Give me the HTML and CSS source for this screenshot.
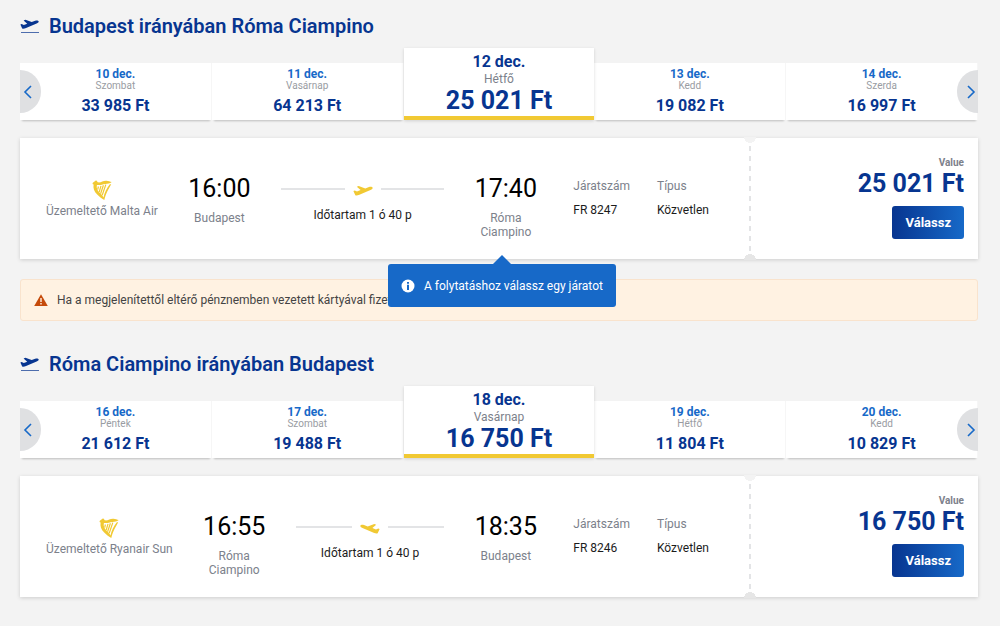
FILE: index.html
```
<!DOCTYPE html>
<html lang="hu">
<head>
<meta charset="utf-8">
<meta name="viewport" content="width=device-width, initial-scale=1">
<title>Budapest – Róma Ciampino</title>
<link rel="stylesheet" href="styles.css">
</head>
<body>
<svg class="symbols" aria-hidden="true">
  <symbol id="takeoff" viewBox="0 0 20 11">
    <path d="M.4 5.600 1.800 4.900 4 5.900 7.600 4.600 3.800 1.300l1.900-.7 6.600 2.300L16 1.500c1.500-.5 3.200-.4 3.600.5.400 1-.7 1.900-2.100 2.400L6.400 9.300c-1.900.7-3.600 1.100-4.200.200z"/>
  </symbol>
  <symbol id="harp" viewBox="0 0 20 20">
    <path d="M.8 2.800 2.800 1.200c.6-.9 2.100-.8 2.500.2.200.5.100.7.400.9 3.300.7 5.200-1.800 8.800-1.500 2 .2 3.500.9 5.200 1.200-1.700 2-4.200 1.700-6.200 1.900-3.200.3-5.500 1.600-8.600 1-.8 2.900.6 6 3.500 8.700 1.400 1.400 2.500 2.500 3.100 4C12.300 12.500 14.800 8 17.800 4.200h1.400C16.700 9 13.900 13 12.300 20 9.500 18.200 7.300 17 5.200 14.600 2 11.300 1 8 1.600 4.400L.5 4z"/>
    <path class="strings" d="M6.400 6.500 5.700 9.600M9 5.800 7.200 12M11.400 5.200 8.600 13.800M13.800 4.600 10.200 15.300"/>
  </symbol>
</svg>

<main class="page">
  <section class="journey">
    <h2 class="journey-title">
      <svg class="title-icon" viewBox="0 0 20 15"><use href="#takeoff" width="19" height="11"/><path d="M1 13.500h18" stroke="currentColor" opacity=".7"/></svg>
      Budapest irányában Róma Ciampino
    </h2>
    <div class="dates">
      <button class="day"><span class="date">10 dec.</span><span class="weekday">Szombat</span><span class="fare">33 985 Ft</span></button>
      <button class="day"><span class="date">11 dec.</span><span class="weekday">Vasárnap</span><span class="fare">64 213 Ft</span></button>
      <button class="day selected" aria-pressed="true"><span class="date">12 dec.</span><span class="weekday">Hétfő</span><span class="fare">25 021 Ft</span></button>
      <button class="day"><span class="date">13 dec.</span><span class="weekday">Kedd</span><span class="fare">19 082 Ft</span></button>
      <button class="day"><span class="date">14 dec.</span><span class="weekday">Szerda</span><span class="fare">16 997 Ft</span></button>
      <button class="nav prev" aria-label="Előző"><svg viewBox="0 0 10 14"><path d="M8 1 2 7l6 6"/></svg></button>
      <button class="nav next" aria-label="Következő"><svg viewBox="0 0 10 14"><path d="m2 1 6 6-6 6"/></svg></button>
    </div>
    <article class="flight">
      <div class="trip">
        <div class="airline"><svg class="harp"><use href="#harp"/></svg><span>Üzemeltető Malta Air</span></div>
        <div class="stop"><time class="clock">16:00</time><span class="city">Budapest</span></div>
        <div class="route">
          <div class="track"><svg class="plane"><use href="#takeoff"/></svg></div>
          <span class="duration">Időtartam 1 ó 40 p</span>
        </div>
        <div class="stop"><time class="clock">17:40</time><span class="city">Róma Ciampino</span></div>
        <dl class="facts">
          <div class="fact"><dt>Járatszám</dt><dd>FR 8247</dd></div>
          <div class="fact"><dt>Típus</dt><dd>Közvetlen</dd></div>
        </dl>
      </div>
      <div class="offer">
        <span class="plan">Value</span>
        <span class="price">25 021 Ft</span>
        <button class="choose">Válassz</button>
      </div>
      <div class="tooltip" role="tooltip">
        <svg class="info" viewBox="0 0 14 14"><circle cx="7" cy="7" r="6.500"/><path d="M6 3h2v1.700H6zM6 5.800h2V11H6z"/></svg>
        A folytatáshoz válassz egy járatot
      </div>
    </article>
  </section>

  <div class="notice">
    <svg class="warning" viewBox="0 0 14 12"><path d="M7 .3 13.800 12H.2z"/><path class="mark" d="M6.300 4h1.400v4H6.300zM6.300 9h1.400v1.500H6.300z"/></svg>
    <span>Ha a megjelenítettől eltérő pénznemben vezetett kártyával fizetsz</span>
  </div>

  <section class="journey">
    <h2 class="journey-title">
      <svg class="title-icon" viewBox="0 0 20 15"><use href="#takeoff" width="19" height="11"/><path d="M1 13.500h18" stroke="currentColor" opacity=".7"/></svg>
      Róma Ciampino irányában Budapest
    </h2>
    <div class="dates">
      <button class="day"><span class="date">16 dec.</span><span class="weekday">Péntek</span><span class="fare">21 612 Ft</span></button>
      <button class="day"><span class="date">17 dec.</span><span class="weekday">Szombat</span><span class="fare">19 488 Ft</span></button>
      <button class="day selected" aria-pressed="true"><span class="date">18 dec.</span><span class="weekday">Vasárnap</span><span class="fare">16 750 Ft</span></button>
      <button class="day"><span class="date">19 dec.</span><span class="weekday">Hétfő</span><span class="fare">11 804 Ft</span></button>
      <button class="day"><span class="date">20 dec.</span><span class="weekday">Kedd</span><span class="fare">10 829 Ft</span></button>
      <button class="nav prev" aria-label="Előző"><svg viewBox="0 0 10 14"><path d="M8 1 2 7l6 6"/></svg></button>
      <button class="nav next" aria-label="Következő"><svg viewBox="0 0 10 14"><path d="m2 1 6 6-6 6"/></svg></button>
    </div>
    <article class="flight">
      <div class="trip">
        <div class="airline"><svg class="harp"><use href="#harp"/></svg><span>Üzemeltető Ryanair Sun</span></div>
        <div class="stop"><time class="clock">16:55</time><span class="city">Róma Ciampino</span></div>
        <div class="route">
          <div class="track"><svg class="plane inbound"><use href="#takeoff"/></svg></div>
          <span class="duration">Időtartam 1 ó 40 p</span>
        </div>
        <div class="stop"><time class="clock">18:35</time><span class="city">Budapest</span></div>
        <dl class="facts">
          <div class="fact"><dt>Járatszám</dt><dd>FR 8246</dd></div>
          <div class="fact"><dt>Típus</dt><dd>Közvetlen</dd></div>
        </dl>
      </div>
      <div class="offer">
        <span class="plan">Value</span>
        <span class="price">16 750 Ft</span>
        <button class="choose">Válassz</button>
      </div>
    </article>
  </section>
</main>
</body>
</html>
```

FILE: styles.css
```
* { box-sizing: border-box; }

body {
  margin: 0;
  background: #f3f3f3;
  color: #1c1c1c;
  font: 12px/14px Roboto, "Liberation Sans", sans-serif;
}

button { font: inherit; border: 0; cursor: pointer; }

.symbols { position: absolute; width: 0; height: 0; }

.page { padding: 12px 22px 28px 20px; }

.journey-title {
  display: flex;
  align-items: center;
  gap: 9px;
  margin: 0 0 8px;
  color: #073590;
  font-size: 20px;
  line-height: 28px;
  font-weight: 600;
}
.title-icon { width: 20px; height: 15px; fill: currentColor; }

/* Date strip */
.dates {
  position: relative;
  display: flex;
  align-items: flex-end;
}
.day {
  flex: 1 1 0;
  display: flex;
  flex-direction: column;
  align-items: center;
  height: 57px;
  padding: 5px 0 0;
  background: #fff;
  border-right: 1px solid #f6f6f6;
  box-shadow: 0 3px 2px -2px rgba(0, 0, 0, .22);
}
.date { color: #1769c8; font-size: 12px; line-height: 12px; font-weight: 700; }
.weekday { color: #999ca2; font-size: 10px; line-height: 12px; }
.fare { margin-top: 4px; color: #073590; font-size: 16px; line-height: 20px; font-weight: 700; }

.selected {
  z-index: 1;
  height: 72px;
  padding-top: 4px;
  border-right: 0;
  border-bottom: 4px solid #f1c933;
  box-shadow: 0 1px 3px rgba(0, 0, 0, .15);
}
.selected .date { color: #073590; font-size: 16px; line-height: 20px; font-weight: 700; }
.selected .weekday { color: #7c818b; font-size: 12px; line-height: 14px; }
.selected .fare { margin-top: 2px; font-size: 25px; line-height: 26px; }

.nav {
  position: absolute;
  bottom: 7px;
  display: flex;
  align-items: center;
  justify-content: center;
  width: 21px;
  height: 43px;
  padding: 0;
  background: #dfe0e2;
}
.nav svg { width: 10px; height: 14px; fill: none; stroke: #1769c8; stroke-width: 1.6; }
.prev { left: 0; padding-right: 6px; border-radius: 0 22px 22px 0; }
.next { right: 0; padding-left: 6px; border-radius: 22px 0 0 22px; }

/* Flight card */
.flight {
  position: relative;
  display: flex;
  min-height: 121px;
  margin-top: 18px;
  background: #fff;
  box-shadow: 0 1px 4px rgba(0, 0, 0, .16);
}
.trip {
  flex: 1;
  display: flex;
  gap: 30px;
  padding: 35px 41px 18px 26px;
}
.airline {
  display: flex;
  flex-direction: column;
  align-items: center;
  gap: 4px;
  padding-top: 7px;
  color: #7c818b;
  white-space: nowrap;
}
.harp { width: 20px; height: 20px; fill: #f1c933; }
.strings { fill: none; stroke: #f1c933; stroke-width: 1.2; }

.stop {
  display: flex;
  flex-direction: column;
  align-items: center;
  gap: 6px;
  width: 63px;
  text-align: center;
}
.clock { color: #000; font-size: 25px; line-height: 32px; }
.city { color: #7c818b; }

.route {
  flex: 1;
  display: flex;
  flex-direction: column;
  align-items: center;
  gap: 11px;
  padding-top: 8px;
}
.track {
  display: flex;
  align-items: center;
  gap: 8px;
  align-self: stretch;
}
.track::before, .track::after { content: ""; flex: 1; height: 2px; background: #e3e4e6; }
.plane { width: 20px; height: 16px; padding-top: 4px; fill: #f1c933; }
.inbound { transform: scaleX(-1); }
.duration { color: #1c1c1c; }

.facts { display: flex; gap: 27px; margin: 0 0 0 6px; padding-top: 6px; }
.fact { display: grid; gap: 10px; align-content: start; white-space: nowrap; }
.fact dt { color: #7c818b; }
.fact dd { margin: 0; }

.offer {
  position: relative;
  display: flex;
  flex-direction: column;
  align-items: flex-end;
  width: 228px;
  padding: 18px 14px 20px;
}
/* Ticket perforation between trip and price */
.offer::before {
  content: "";
  position: absolute;
  inset: 8px auto 6px -1px;
  width: 2px;
  background: repeating-linear-gradient(#e3e4e6 0 5px, transparent 5px 10px);
}
.offer::after {
  content: "";
  position: absolute;
  inset: -1px auto -1px -6px;
  width: 12px;
  background:
    radial-gradient(circle at 6px 0, #f3f3f3 6px, transparent 6px) top / 12px 7px no-repeat,
    radial-gradient(circle at 6px 7px, #e6e6e6 6px, transparent 6px) bottom / 12px 7px no-repeat;
}
.plan { color: #7c818b; font-size: 10px; line-height: 14px; font-weight: 700; }
.price { color: #073590; font-size: 25px; line-height: 28px; font-weight: 700; }
.choose {
  height: 33px;
  margin-top: 8px;
  padding: 0 13px;
  border-radius: 3px;
  background: linear-gradient(90deg, #073590, #1769c8);
  color: #fff;
  font-size: 13px;
  font-weight: 700;
}

.tooltip {
  position: absolute;
  z-index: 2;
  top: 126px;
  left: 368px;
  display: flex;
  align-items: center;
  gap: 9px;
  height: 43px;
  padding: 0 13px;
  border-radius: 3px;
  background: #1769c8;
  color: #fff;
  white-space: nowrap;
}
.tooltip::before {
  content: "";
  position: absolute;
  left: 50%;
  bottom: 100%;
  margin-left: -9px;
  border: 9px solid transparent;
  border-top: 0;
  border-bottom-color: #1769c8;
}
.info { width: 14px; height: 14px; fill: #fff; }
.info path { fill: #1769c8; }

.notice {
  display: flex;
  align-items: center;
  gap: 9px;
  margin: 20px 0 29px;
  padding: 13px;
  border: 1px solid #f9e3cd;
  border-radius: 3px;
  background: #fff2e2;
  color: #444;
}
.warning { width: 14px; height: 12px; fill: #c54a0a; }
.mark { fill: #fff2e2; }
```
